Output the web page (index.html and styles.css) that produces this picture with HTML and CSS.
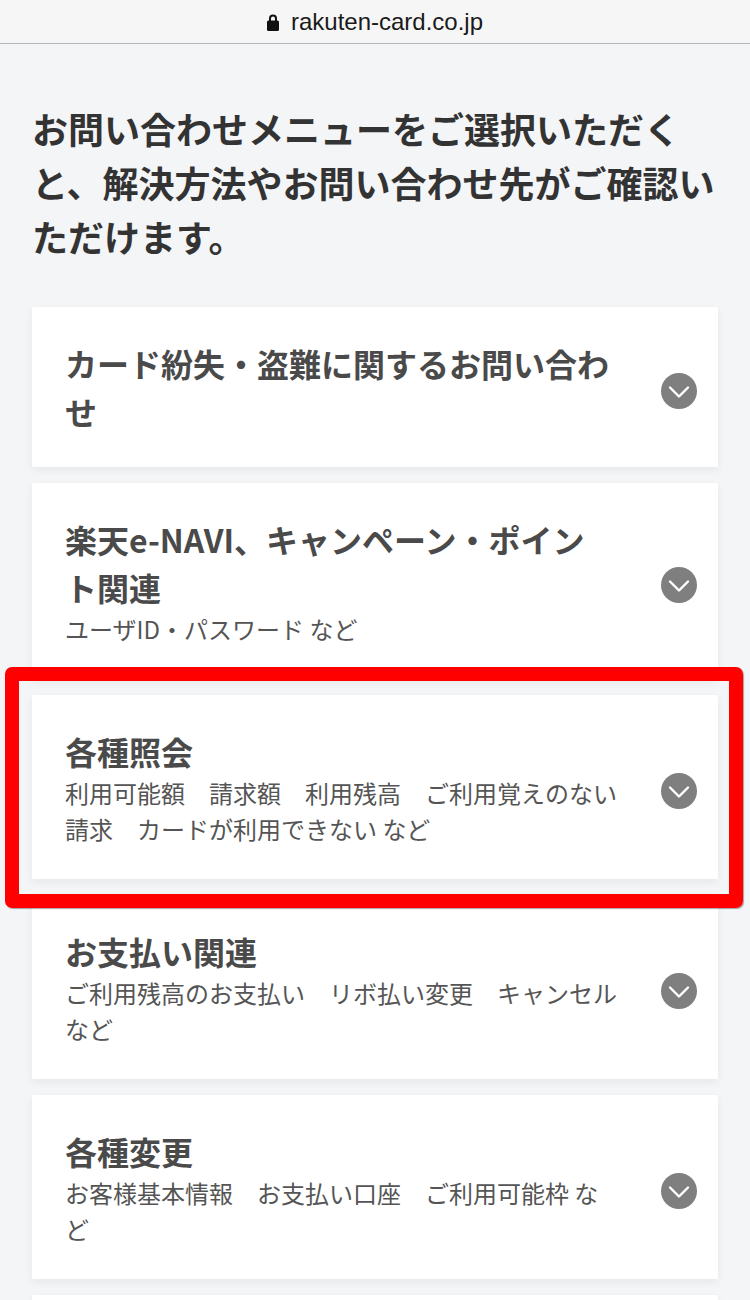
FILE: index.html
```html
<!DOCTYPE html>
<html lang="ja">
<head>
  <meta charset="utf-8">
  <link rel="stylesheet" href="styles.css">
</head>
<body>
  <div class="urlbar">
    <svg class="lock" width="12" height="18" viewBox="0 0 12 18">
      <path d="M3 8V5.5a3 3 0 0 1 6 0V8" fill="none" stroke="#111" stroke-width="2"/>
      <rect x="0" y="7.5" width="12" height="10.5" rx="1.5" fill="#111"/>
    </svg>
    <span>rakuten-card.co.jp</span>
  </div>

  <div class="content">
    <p class="lead">お問い合わせメニューをご選択いただくと、解決方法やお問い合わせ先がご確認いただけます。</p>

    <ul class="menu">
      <li class="menu-item">
        <div class="menu-text">
          <p class="menu-title">カード紛失・盗難に関するお問い合わせ</p>
        </div>
        <span class="toggle"><svg viewBox="0 0 36 36"><path d="M9 14.5l9 9 9-9"/></svg></span>
      </li>
      <li class="menu-item">
        <div class="menu-text">
          <p class="menu-title">楽天e-NAVI、キャンペーン・ポイント関連</p>
          <p class="menu-desc">ユーザID・パスワード など</p>
        </div>
        <span class="toggle"><svg viewBox="0 0 36 36"><path d="M9 14.5l9 9 9-9"/></svg></span>
      </li>
      <li class="menu-item">
        <div class="menu-text">
          <p class="menu-title">各種照会</p>
          <p class="menu-desc">利用可能額　請求額　利用残高　ご利用覚えのない請求　カードが利用できない など</p>
        </div>
        <span class="toggle"><svg viewBox="0 0 36 36"><path d="M9 14.5l9 9 9-9"/></svg></span>
      </li>
      <li class="menu-item">
        <div class="menu-text">
          <p class="menu-title">お支払い関連</p>
          <p class="menu-desc">ご利用残高のお支払い　リボ払い変更　キャンセル など</p>
        </div>
        <span class="toggle"><svg viewBox="0 0 36 36"><path d="M9 14.5l9 9 9-9"/></svg></span>
      </li>
      <li class="menu-item">
        <div class="menu-text">
          <p class="menu-title">各種変更</p>
          <p class="menu-desc">お客様基本情報　お支払い口座　ご利用可能枠 など</p>
        </div>
        <span class="toggle"><svg viewBox="0 0 36 36"><path d="M9 14.5l9 9 9-9"/></svg></span>
      </li>
      <!-- next item, only its top edge is in view -->
      <li class="menu-item menu-item-next"></li>
    </ul>
  </div>

  <!-- annotation frame around the third item -->
  <div class="highlight"></div>
</body>
</html>
```

FILE: styles.css
```css
body {
  margin: 0;
  background: #F4F5F7;
  font-family: "Noto Sans CJK JP", "Noto Sans", sans-serif;
  color: #333333;
}

.urlbar {
  height: 43px;
  border-bottom: 1px solid #B4B4B4;
  background: #F6F6F7;
  display: flex;
  align-items: center;
  justify-content: center;
  gap: 12px;
  font-family: "Liberation Sans", "Noto Sans", sans-serif;
  font-size: 24px;
  color: #1A1A1A;
}

.urlbar .lock {
  display: block;
  margin-top: 1px;
}

.content {
  padding: 57px 32px 0;
}

.lead {
  margin: 0 0 44px;
  font-size: 36px;
  line-height: 54px;
  font-weight: 700;
  color: #333333;
}

.menu {
  list-style: none;
  margin: 0;
  padding: 0;
}

.menu-item {
  display: flex;
  align-items: center;
  gap: 40px;
  padding: 32px 21px 32px 33px;
  margin-bottom: 16px;
  background: #FFFFFF;
  box-shadow: 0 3px 8px rgba(0, 0, 0, 0.06);
}

.menu-item-next {
  height: 120px;
}

.menu-text {
  flex: 1;
  min-width: 0;
}

.menu-title {
  margin: 0;
  padding-right: 9px;
  font-size: 32px;
  line-height: 48px;
  font-weight: 700;
  color: #4A4A4A;
}

.menu-desc {
  margin: 0;
  font-size: 24px;
  line-height: 36px;
  color: #555555;
}

.toggle {
  flex: none;
  width: 36px;
  height: 36px;
  margin-top: 8px;
  border-radius: 50%;
  background: #7F7F7F;
}

.toggle svg {
  display: block;
  width: 36px;
  height: 36px;
  fill: none;
  stroke: #FFFFFF;
  stroke-width: 2.4;
  stroke-linecap: round;
  stroke-linejoin: round;
}

.highlight {
  position: absolute;
  left: 5px;
  top: 667px;
  width: 710px;
  height: 213px;
  border: 14px solid #FF0000;
  border-radius: 7px;
  box-shadow: 1px 1px 1px rgba(0, 0, 0, 0.35);
  pointer-events: none;
}
```
